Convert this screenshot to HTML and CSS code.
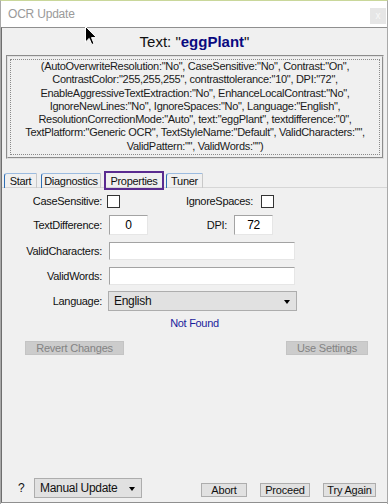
FILE: index.html
```html
<!DOCTYPE html>
<html lang="en">
  <head>
    <meta charset="UTF-8" />
    <meta name="viewport" content="width=device-width, initial-scale=1.0" />
    <title>OCR Update</title>
    <link rel="stylesheet" href="styles.css">
  </head>
  <body>
    <div class="window">
      <div class="titlebar">
        <span class="title">OCR Update</span>
        <span class="close">x</span>
      </div>

      <div class="client">
        <div class="heading">Text: "<b>eggPlant</b>"</div>

        <div class="summary">
          <div class="summary-inner">
            (AutoOverwriteResolution:"No", CaseSensitive:"No", Contrast:"On",<br>
            ContrastColor:"255,255,255", contrasttolerance:"10", DPI:"72",<br>
            EnableAggressiveTextExtraction:"No", EnhanceLocalContrast:"No",<br>
            IgnoreNewLines:"No", IgnoreSpaces:"No", Language:"English",<br>
            ResolutionCorrectionMode:"Auto", text:"eggPlant", textdifference:"0",<br>
            TextPlatform:"Generic OCR", TextStyleName:"Default", ValidCharacters:"",<br>
            ValidPattern:"", ValidWords:"")
          </div>
        </div>

        <div class="tabs">
          <span class="tab tab-start">Start</span>
          <span class="tab tab-diag">Diagnostics</span>
          <span class="tab tab-props active">Properties</span>
          <span class="tab tab-tuner">Tuner</span>
        </div>

        <div class="form">
          <div class="row row-check">
            <label class="label">CaseSensitive:</label>
            <span class="checkbox"></span>
            <label class="label label-second">IgnoreSpaces:</label>
            <span class="checkbox"></span>
          </div>
          <div class="row row-small">
            <label class="label">TextDifference:</label>
            <span class="field small">0</span>
            <label class="label label-dpi">DPI:</label>
            <span class="field small">72</span>
          </div>
          <div class="row row-wide">
            <label class="label">ValidCharacters:</label>
            <span class="field wide"></span>
          </div>
          <div class="row row-wide">
            <label class="label">ValidWords:</label>
            <span class="field wide"></span>
          </div>
          <div class="row row-select">
            <label class="label">Language:</label>
            <span class="dropdown language">English<i class="arrow"></i></span>
          </div>
          <div class="status">Not Found</div>
          <div class="actions">
            <button class="btn disabled revert">Revert Changes</button>
            <button class="btn disabled use">Use Settings</button>
          </div>
        </div>

        <div class="footer">
          <span class="help">?</span>
          <span class="dropdown mode">Manual Update<i class="arrow"></i></span>
          <div class="footer-buttons">
            <button class="btn abort">Abort</button>
            <button class="btn proceed">Proceed</button>
            <button class="btn again">Try Again</button>
          </div>
        </div>
      </div>

      <svg class="cursor" width="13" height="20" viewBox="0 0 13 20">
        <path d="M0.5 0.5 L0.5 16 L4.2 12.4 L6.8 18.5 L9 17.6 L6.5 11.6 L11.5 11.6 Z" fill="#000" stroke="#fff" stroke-width="1"/>
      </svg>
    </div>
  </body>
</html>
```

FILE: styles.css
```css
* {
  box-sizing: border-box;
}
body {
  margin: 0;
  font-family: "Liberation Sans", Arial, sans-serif;
  font-size: 11px;
  background-color: #ffffff;
}
.window {
  position: relative;
  width: 388px;
  height: 504px;
  display: flex;
  flex-direction: column;
  border-top: 1px solid #c9d79a;
  border-right: 1px solid #a9a9a9;
  border-left: 1px solid #a9a9a9;
}
.titlebar {
  height: 26px;
  background-color: #ffffff;
  display: flex;
  align-items: flex-start;
  justify-content: space-between;
  padding: 0 1px 0 7px;
}
.title {
  margin-top: 6px;
  color: #9a9a9a;
  font-size: 12px;
  letter-spacing: -0.2px;
}
.close {
  width: 16px;
  height: 16px;
  margin-top: 7px;
  background-color: #e6e6e6;
  color: #f8f8f8;
  font-size: 10px;
  text-align: center;
  line-height: 15px;
}
.client {
  flex: 1;
  display: flex;
  flex-direction: column;
  background-color: #f0f0f0;
  border-top: 1px solid #8f8f8f;
  border-left: 1px solid #6e6e6e;
  border-bottom: 1px solid #8f8f8f;
  margin-bottom: 1px;
  letter-spacing: -0.3px;
}
.heading {
  height: 27px;
  line-height: 27px;
  text-align: center;
  font-size: 15px;
  letter-spacing: 0;
  color: #111111;
}
.heading b {
  color: #0a0a80;
}
.summary {
  margin: 0 3px 0 4px;
  border: 2px groove #e0e0e0;
  padding: 2px;
}
.summary-inner {
  border: 1px dotted #8a8a8a;
  text-align: center;
  line-height: 13.3px;
  padding-bottom: 1px;
  color: #1a1a1a;
}
.tabs {
  display: flex;
  margin-top: 14px;
  padding-left: 2px;
  height: 15px;
  border-bottom: 1px solid #d6d6d6;
}
.tab {
  height: 15px;
  line-height: 15px;
  text-align: center;
  border-left: 1px solid #2f6fb5;
  border-top: 1px solid #9bbbe0;
  border-right: 1px solid #c8c8c8;
  border-top-left-radius: 3px;
  color: #111111;
}
.tab-start {
  width: 33px;
  margin-right: 4px;
}
.tab-diag {
  width: 60px;
  margin-right: 5px;
}
.tab-props {
  width: 56px;
  margin-right: 4px;
}
.tab-tuner {
  width: 37px;
}
.tab.active {
  outline: 2px solid #5a2b90;
  outline-offset: 0;
  border-color: transparent;
  border-radius: 0;
}
.form {
  display: flex;
  flex-direction: column;
}
.row {
  display: flex;
  align-items: center;
}
.label {
  width: 100px;
  text-align: right;
  color: #111111;
}
.row-check {
  margin-top: 6px;
  height: 14px;
}
.row-small {
  margin-top: 7px;
  height: 20px;
}
.row-wide {
  margin-top: 7px;
  height: 18px;
}
.row-select {
  margin-top: 6px;
  height: 20px;
}
.checkbox {
  width: 13px;
  height: 13px;
  margin-left: 5px;
  background-color: #ffffff;
  border: 1px solid #333333;
}
.label-second {
  width: 133px;
  margin-right: 3px;
}
.field {
  height: 100%;
  margin-left: 7px;
  background-color: #ffffff;
  border: 1px solid;
  border-color: #a3a3a3 #e6e6e6 #e6e6e6 #a3a3a3;
  text-align: center;
  line-height: 18px;
  font-size: 12px;
}
.field.small {
  width: 39px;
}
.field.wide {
  width: 186px;
}
.label-dpi {
  width: 79px;
}
.dropdown {
  position: relative;
  display: flex;
  align-items: center;
  height: 20px;
  background-color: #e1e1e1;
  border: 1px solid #adadad;
  padding-left: 5px;
  font-size: 12px;
  color: #111111;
}
.dropdown .arrow {
  position: absolute;
  right: 6px;
  top: 8px;
  border-left: 3px solid transparent;
  border-right: 3px solid transparent;
  border-top: 4px solid #000000;
}
.language {
  width: 189px;
  margin-left: 6px;
}
.status {
  margin-top: 5px;
  height: 14px;
  line-height: 14px;
  text-align: center;
  color: #1c1c9c;
}
.actions {
  display: flex;
  justify-content: space-between;
  margin-top: 11px;
  padding: 0 19px 0 23px;
}
.btn {
  height: 14px;
  padding: 0;
  font-family: "Liberation Sans", Arial, sans-serif;
  font-size: 11px;
  letter-spacing: -0.2px;
  line-height: 12px;
  background-color: #e1e1e1;
  border: 1px solid #adadad;
  color: #111111;
}
.btn.disabled {
  background-color: #cccccc;
  border-color: #c4c4c4;
  color: #838383;
}
.revert {
  width: 99px;
}
.use {
  width: 82px;
}
.footer {
  margin-top: auto;
  display: flex;
  align-items: center;
  height: 20px;
  margin-bottom: 4px;
  padding-left: 16px;
}
.help {
  width: 16px;
  font-size: 12px;
  color: #111111;
}
.mode {
  width: 108px;
}
.footer-buttons {
  display: flex;
  gap: 13px;
  margin-left: auto;
  margin-right: 11px;
  margin-top: 4px;
}
.abort {
  width: 46px;
}
.proceed {
  width: 50px;
}
.again {
  width: 53px;
}
.cursor {
  position: absolute;
  left: 84px;
  top: 25px;
}
```
